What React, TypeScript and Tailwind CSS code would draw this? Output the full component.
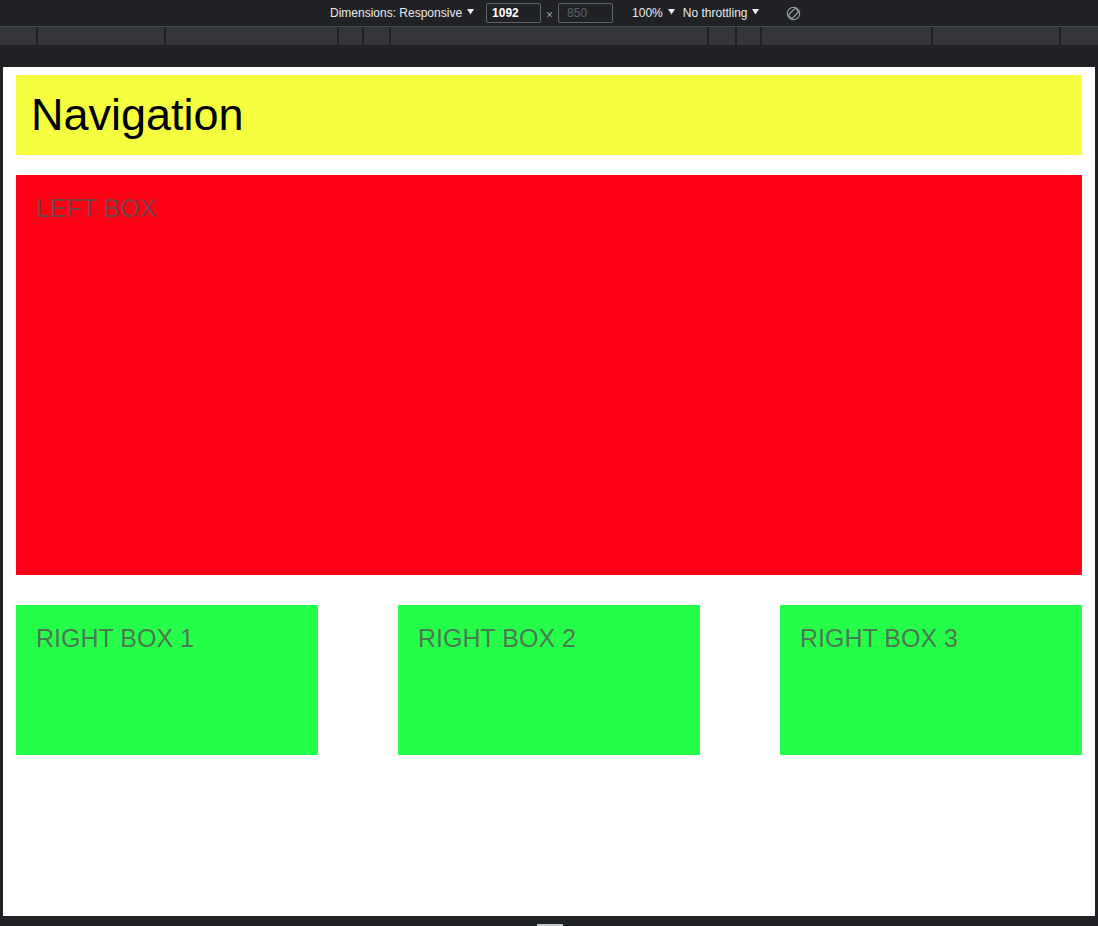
import React from "react";

const rulerSegments = [38, 128, 173, 25, 27, 318, 28, 25, 171, 128];

function Caret() {
  return (
    <svg width="7" height="6" viewBox="0 0 7 6" className="ml-[5px] mt-[-2px]">
      <path d="M0 0 L7 0 L3.5 5.5 Z" fill="#e8eaed" />
    </svg>
  );
}

function RotateIcon() {
  return (
    <svg width="15" height="15" viewBox="0 0 15 15">
      <circle cx="7.5" cy="7.5" r="6.2" fill="none" stroke="#9aa0a6" strokeWidth="1.1" />
      <rect x="5" y="2.6" width="5" height="9.8" rx="1" fill="none" stroke="#9aa0a6" strokeWidth="1.1" transform="rotate(45 7.5 7.5)" />
    </svg>
  );
}

function Box({ label, className }: { label: string; className: string }) {
  return (
    <div className={`pt-[19px] px-5 ${className}`}>
      <div className="text-[25px] leading-[1.15] text-[#555]/80 font-['Liberation_Sans',Arial,sans-serif]">{label}</div>
    </div>
  );
}

export default function App() {
  return (
    <div className="w-[1098px] h-[926px] bg-[#202124] flex flex-col overflow-hidden font-['Liberation_Sans',Arial,sans-serif]">
      {/* device toolbar */}
      <div className="h-[27px] flex items-center text-[12px] text-[#e8eaed] border-b border-[#494c50]">
        <div className="w-[330px]" />
        <div className="flex items-center">
          Dimensions: Responsive
          <Caret />
        </div>
        <div className="ml-[12px] w-[55px] h-[20px] border border-[#5f6368] rounded-[2px] bg-[#202124] px-[5px] flex items-center text-white font-bold">
          1092
        </div>
        <div className="mx-[5px] text-[#9aa0a6] text-[12px] mt-[3px]">×</div>
        <div className="w-[55px] h-[20px] border border-[#5f6368] rounded-[2px] px-[8px] flex items-center text-[#5f6368]">
          850
        </div>
        <div className="ml-[19px] flex items-center">
          100%
          <Caret />
        </div>
        <div className="ml-[8px] flex items-center">
          No throttling
          <Caret />
        </div>
        <div className="ml-[27px] flex items-center">
          <RotateIcon />
        </div>
      </div>

      {/* ruler */}
      <div className="h-[18px] bg-[#35363a] flex">
        {rulerSegments.map((w, i) => (
          <div key={i} className="h-full border-r-2 border-[#202124]" style={{ width: w }} />
        ))}
        <div className="flex-1" />
      </div>

      <div className="h-[22px]" />

      {/* viewport */}
      <div className="mx-[3px] h-[849px] bg-white pt-[8px] px-[13px] flex flex-col">
        <div className="h-[80px] bg-[#f6ff3f] px-[15px] pt-[14px]">
          <div className="text-[45px] leading-[1.15] text-black">Navigation</div>
        </div>

        <Box label="LEFT BOX" className="mt-[20px] h-[400px] bg-[#ff0016]" />

        <div className="mt-[30px] flex justify-between">
          <Box label="RIGHT BOX 1" className="w-[302px] h-[150px] bg-[#26ff4a]" />
          <Box label="RIGHT BOX 2" className="w-[302px] h-[150px] bg-[#26ff4a]" />
          <Box label="RIGHT BOX 3" className="w-[302px] h-[150px] bg-[#26ff4a]" />
        </div>
      </div>

      {/* bottom handle */}
      <div className="flex-1 relative">
        <div className="absolute left-[537px] top-[8px] w-[26px] h-[2px] bg-[#c4c7cc]" />
      </div>
    </div>
  );
}
